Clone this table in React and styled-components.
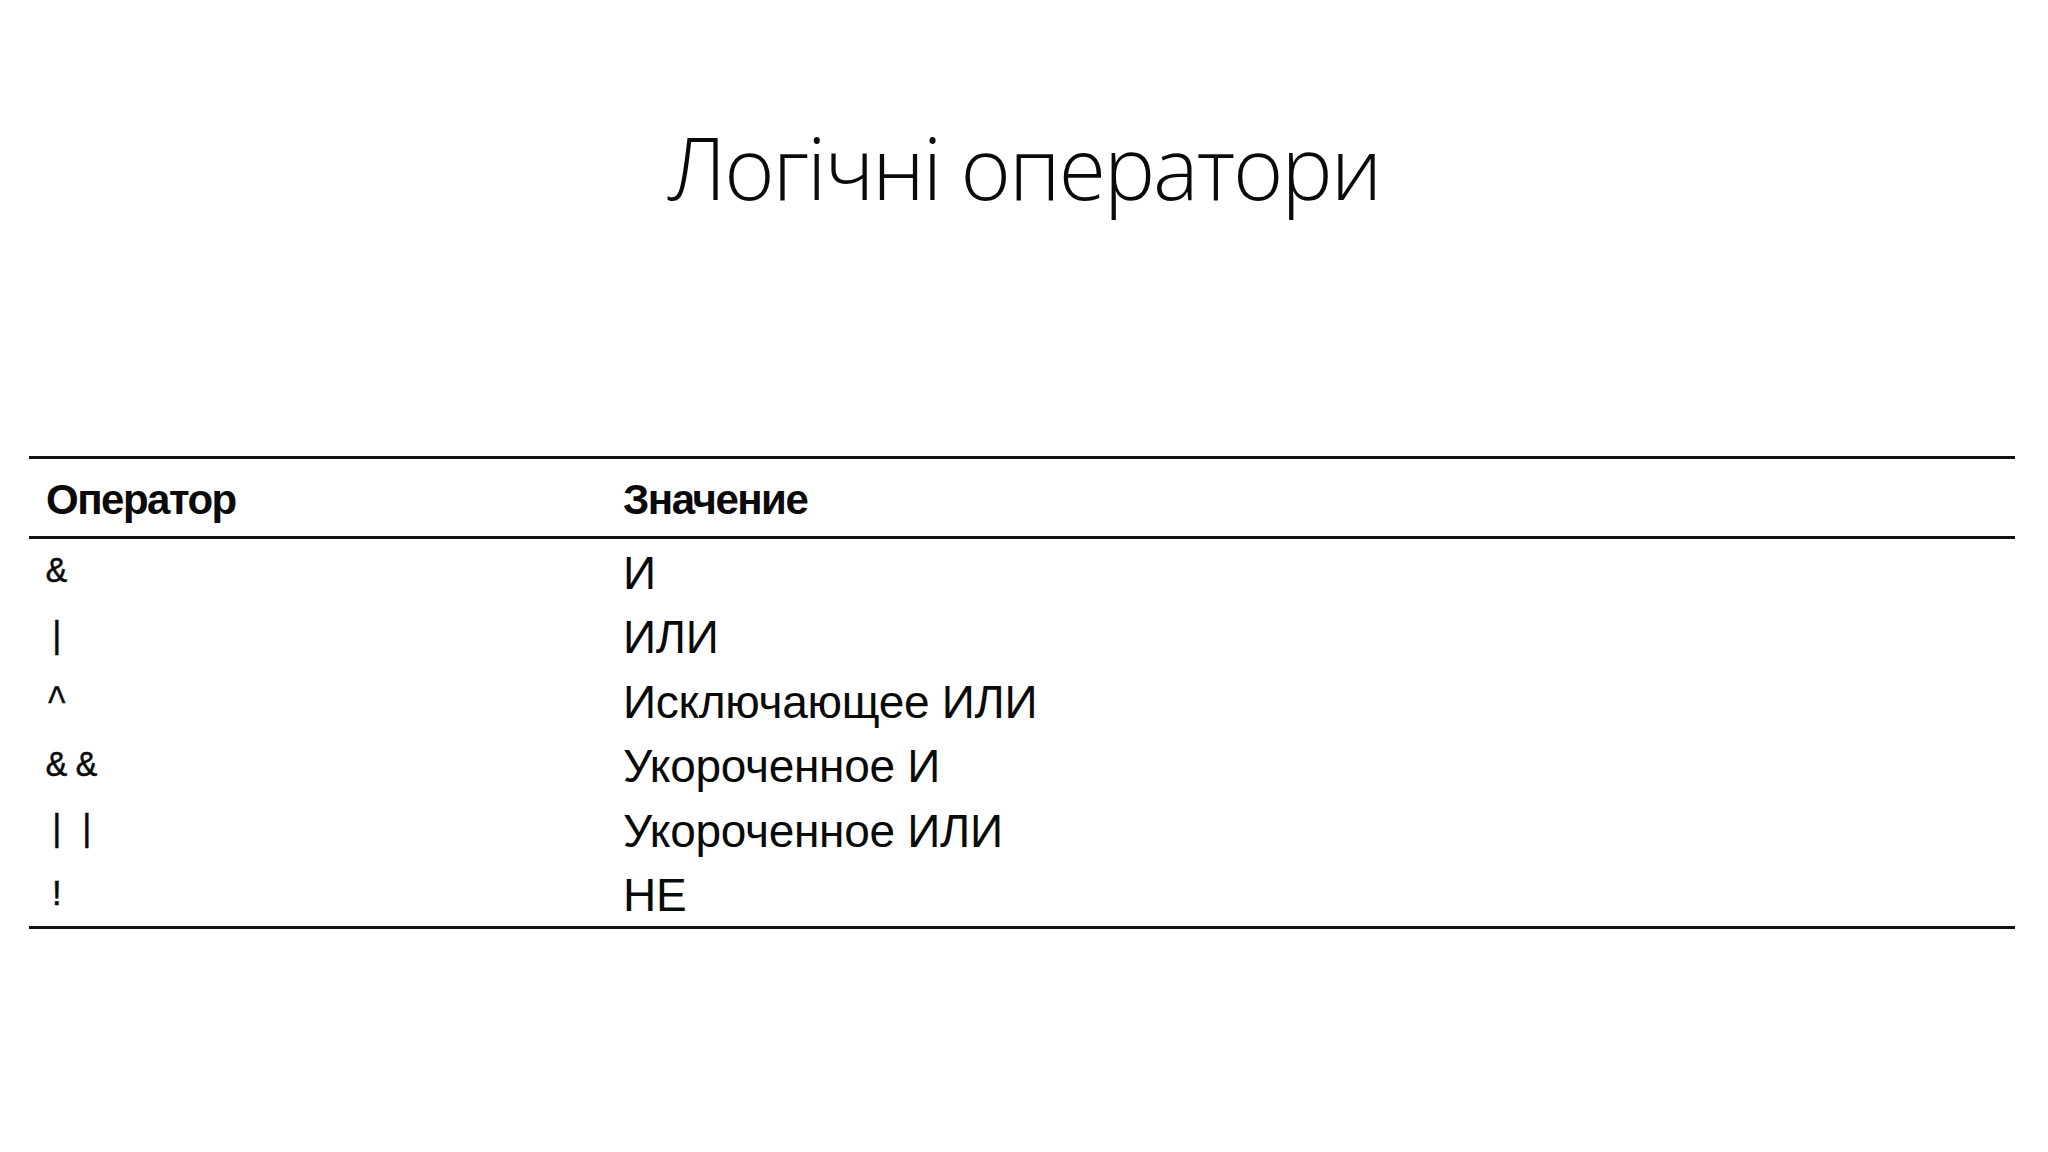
import React from 'react'
import styled, { createGlobalStyle } from 'styled-components'

const GlobalStyle = createGlobalStyle`
  html, body {
    margin: 0;
    padding: 0;
    background: #fff;
  }
  body {
    width: 2048px;
    height: 1152px;
    overflow: hidden;
  }
`

const rows = [
  { op: '&', meaning: 'И' },
  { op: '|', meaning: 'ИЛИ' },
  { op: '^', meaning: 'Исключающее ИЛИ' },
  { op: '& &', meaning: 'Укороченное И' },
  { op: '| |', meaning: 'Укороченное ИЛИ' },
  { op: '!', meaning: 'НЕ' },
]

const Slide = styled.div`
  width: 2048px;
  height: 1152px;
  display: flex;
  flex-direction: column;
  background: #fff;
  color: #0a0a0a;
`

const Title = styled.h1`
  margin: 124px 0 0;
  font-family: "Open Sans", "Noto Sans", sans-serif;
  font-weight: 300;
  font-size: 86px;
  line-height: 1;
  text-align: center;
  letter-spacing: -2px;
`

const Table = styled.div`
  margin: 246px 33px 0 29px;
  border-top: 3px solid #111;
  border-bottom: 3px solid #111;
  font-family: "Liberation Sans", Arial, sans-serif;
`

const Row = styled.div`
  display: grid;
  grid-template-columns: 594px 1fr;
  align-items: center;
  box-sizing: border-box;
  height: ${({ head }) => (head ? '80px' : '64.5px')};
  padding-top: ${({ head }) => (head ? '4px' : '3px')};
  border-bottom: ${({ head }) => (head ? '3px solid #111' : 'none')};
`

const HeadCell = styled.div`
  padding-left: ${({ first }) => (first ? '17px' : '0')};
  font-weight: 700;
  font-size: 42px;
  letter-spacing: -1.5px;
`

const OpCell = styled.div`
  padding-left: 17px;
  font-family: "Liberation Mono", "DejaVu Sans Mono", monospace;
  font-size: 36px;
  letter-spacing: -6.6px;
  white-space: pre;
  -webkit-text-stroke: 0.4px #0a0a0a;
`

const MeaningCell = styled.div`
  font-size: 46px;
  letter-spacing: -0.3px;
`

export default function App() {
  return (
    <Slide>
      <GlobalStyle />
      <Title>Логічні оператори</Title>
      <Table>
        <Row head>
          <HeadCell first>Оператор</HeadCell>
          <HeadCell>Значение</HeadCell>
        </Row>
        {rows.map((r, i) => (
          <Row key={i}>
            <OpCell>{r.op}</OpCell>
            <MeaningCell>{r.meaning}</MeaningCell>
          </Row>
        ))}
      </Table>
    </Slide>
  )
}
